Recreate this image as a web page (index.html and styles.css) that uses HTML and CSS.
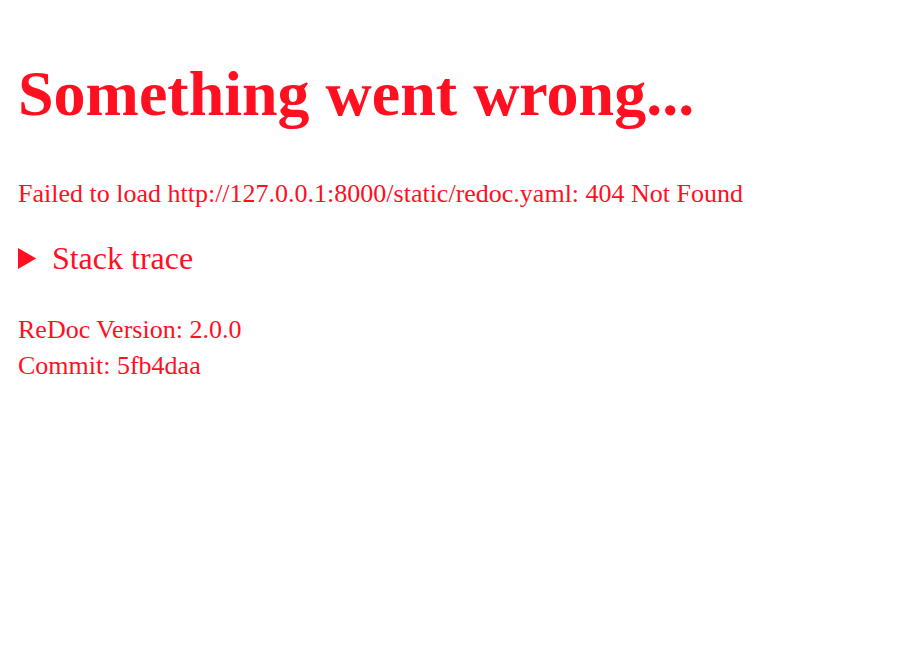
FILE: index.html
```html
<!DOCTYPE html>
<html lang="en">
<head>
<meta charset="utf-8">
<title>ReDoc</title>
<link rel="stylesheet" href="styles.css">
</head>
<body>
<div class="error">
  <h1 class="title">Something went wrong...</h1>
  <div class="message">Failed to load http://127.0.0.1:8000/static/redoc.yaml: 404 Not Found</div>
  <details class="stack">
    <summary>Stack trace</summary>
  </details>
  <div class="meta">
    <div>ReDoc Version: 2.0.0</div>
    <div>Commit: 5fb4daa</div>
  </div>
</div>
</body>
</html>
```

FILE: styles.css
```css
html, body {
  margin: 0;
  padding: 0;
  background: #ffffff;
}

.error {
  color: #ff0f1f;
  font-family: "Liberation Serif", "Times New Roman", serif;
  padding: 56px 18px 0;
}

.title {
  margin: 0;
  font-size: 64px;
  line-height: 76px;
  font-weight: bold;
}

.message {
  margin-top: 47px;
  font-size: 26px;
  line-height: 30px;
}

.stack {
  margin-top: 31px;
  font-size: 32px;
  line-height: 36px;
}

.stack summary {
  cursor: pointer;
}

.meta {
  margin-top: 36px;
  font-size: 26px;
  line-height: 36px;
}
```
